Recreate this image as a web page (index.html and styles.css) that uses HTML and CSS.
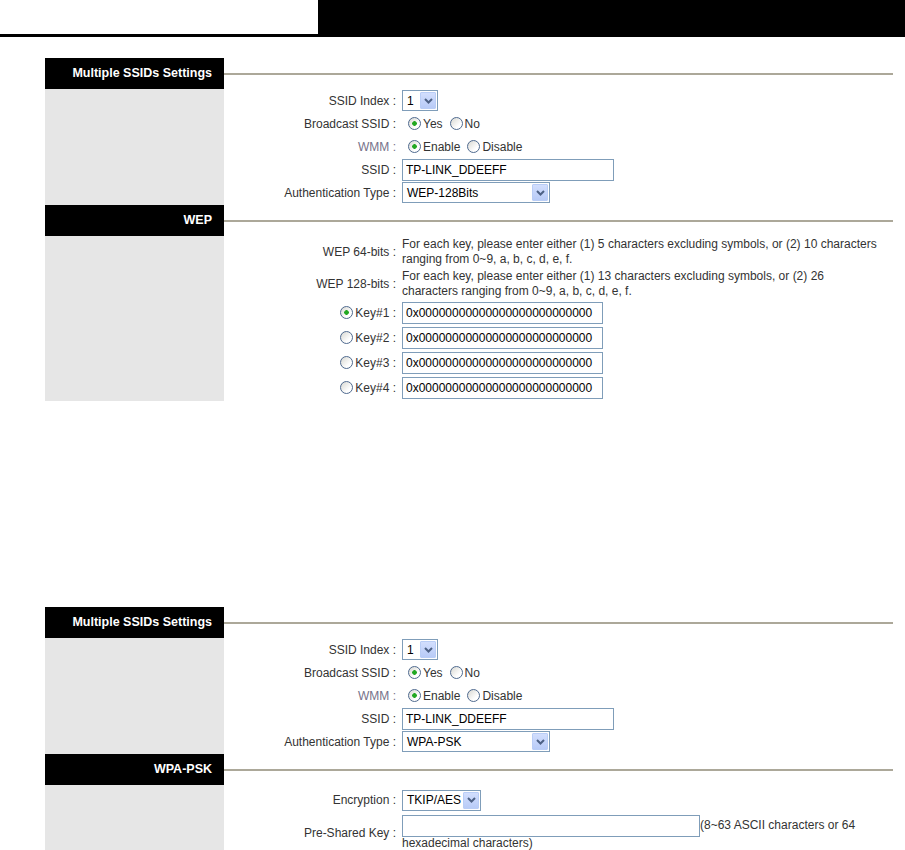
FILE: index.html
```html
<!DOCTYPE html>
<html lang="en">
<head>
  <meta charset="UTF-8">
  <meta name="viewport" content="width=device-width, initial-scale=1.0">
  <title>Multiple SSIDs Settings</title>
  <link rel="stylesheet" href="styles.css">
</head>
<body>

  <div class="topbar">
    <div class="topbar-left"></div>
    <div class="topbar-right"></div>
  </div>

  <!-- Multiple SSIDs with WEP -->
  <div class="panel">
    <div class="panel-head">Multiple SSIDs Settings</div>
    <div class="panel-rule"><span></span></div>
    <div class="panel-side"></div>
    <div class="panel-body">
      <div class="row">
        <label>SSID Index :</label>
        <div class="select sel-index"><span>1</span><i class="drop"><svg width="9" height="6" viewBox="0 0 9 6"><path d="M1 1 L4.5 4.5 L8 1" /></svg></i></div>
      </div>
      <div class="row">
        <label>Broadcast SSID :</label>
        <div class="choices">
          <input type="radio" class="radio" name="bc1" checked><span>Yes</span>
          <input type="radio" class="radio" name="bc1"><span>No</span>
        </div>
      </div>
      <div class="row">
        <label class="dim">WMM :</label>
        <div class="choices">
          <input type="radio" class="radio" name="wmm1" checked><span>Enable</span>
          <input type="radio" class="radio" name="wmm1"><span>Disable</span>
        </div>
      </div>
      <div class="row">
        <label>SSID :</label>
        <input type="text" class="text txt-ssid" value="TP-LINK_DDEEFF">
      </div>
      <div class="row">
        <label>Authentication Type :</label>
        <div class="select sel-auth"><span>WEP-128Bits</span><i class="drop"><svg width="9" height="6" viewBox="0 0 9 6"><path d="M1 1 L4.5 4.5 L8 1" /></svg></i></div>
      </div>
    </div>

    <div class="panel-head">WEP</div>
    <div class="panel-rule"><span></span></div>
    <div class="panel-side"></div>
    <div class="panel-body">
      <div class="row desc">
        <label>WEP 64-bits :</label>
        <div class="note">For each key, please enter either (1) 5 characters excluding symbols, or (2) 10 characters<br>ranging from 0~9, a, b, c, d, e, f.</div>
      </div>
      <div class="row desc">
        <label>WEP 128-bits :</label>
        <div class="note">For each key, please enter either (1) 13 characters excluding symbols, or (2) 26<br>characters ranging from 0~9, a, b, c, d, e, f.</div>
      </div>
      <div class="row key">
        <label><input type="radio" class="radio" name="key" checked>Key#1 :</label>
        <input type="text" class="text txt-key" value="0x00000000000000000000000000">
      </div>
      <div class="row key">
        <label><input type="radio" class="radio" name="key">Key#2 :</label>
        <input type="text" class="text txt-key" value="0x00000000000000000000000000">
      </div>
      <div class="row key">
        <label><input type="radio" class="radio" name="key">Key#3 :</label>
        <input type="text" class="text txt-key" value="0x00000000000000000000000000">
      </div>
      <div class="row key">
        <label><input type="radio" class="radio" name="key">Key#4 :</label>
        <input type="text" class="text txt-key" value="0x00000000000000000000000000">
      </div>
    </div>
  </div>

  <!-- Multiple SSIDs with WPA-PSK -->
  <div class="panel second">
    <div class="panel-head">Multiple SSIDs Settings</div>
    <div class="panel-rule"><span></span></div>
    <div class="panel-side"></div>
    <div class="panel-body">
      <div class="row">
        <label>SSID Index :</label>
        <div class="select sel-index"><span>1</span><i class="drop"><svg width="9" height="6" viewBox="0 0 9 6"><path d="M1 1 L4.5 4.5 L8 1" /></svg></i></div>
      </div>
      <div class="row">
        <label>Broadcast SSID :</label>
        <div class="choices">
          <input type="radio" class="radio" name="bc2" checked><span>Yes</span>
          <input type="radio" class="radio" name="bc2"><span>No</span>
        </div>
      </div>
      <div class="row">
        <label class="dim">WMM :</label>
        <div class="choices">
          <input type="radio" class="radio" name="wmm2" checked><span>Enable</span>
          <input type="radio" class="radio" name="wmm2"><span>Disable</span>
        </div>
      </div>
      <div class="row">
        <label>SSID :</label>
        <input type="text" class="text txt-ssid" value="TP-LINK_DDEEFF">
      </div>
      <div class="row">
        <label>Authentication Type :</label>
        <div class="select sel-auth"><span>WPA-PSK</span><i class="drop"><svg width="9" height="6" viewBox="0 0 9 6"><path d="M1 1 L4.5 4.5 L8 1" /></svg></i></div>
      </div>
    </div>

    <div class="panel-head">WPA-PSK</div>
    <div class="panel-rule"><span></span></div>
    <div class="panel-side"></div>
    <div class="panel-body">
      <div class="row enc">
        <label>Encryption :</label>
        <div class="select sel-enc"><span>TKIP/AES</span><i class="drop"><svg width="9" height="6" viewBox="0 0 9 6"><path d="M1 1 L4.5 4.5 L8 1" /></svg></i></div>
      </div>
      <div class="row psk">
        <label>Pre-Shared Key :</label>
        <div class="psk-field"><input type="text" class="text txt-psk" value="">(8~63 ASCII characters or 64 hexadecimal characters)</div>
      </div>
    </div>
  </div>

</body>
</html>
```

FILE: styles.css
```css
/* Page */
body {
  margin: 0;
  background-color: #ffffff;
  font-family: "Liberation Sans", Arial, sans-serif;
  font-size: 12px;
  color: #333333;
}

/* Top bar */
.topbar {
  display: flex;
  height: 37px;
}

.topbar-left {
  width: 318px;
  height: 34px;
  border-bottom: 3px solid #000000;
}

.topbar-right {
  flex: 1;
  background-color: #000000;
}

/* Settings panel */
.panel {
  display: grid;
  grid-template-columns: 179px 669px;
  margin: 21px 0 0 45px;
}

.panel.second {
  margin-top: 206px;
}

.panel-head {
  height: 31px;
  line-height: 31px;
  padding-right: 12px;
  background-color: #000000;
  color: #ffffff;
  font-weight: bold;
  font-size: 12.5px;
  text-align: right;
}

.panel-rule {
  display: flex;
  align-items: center;
}

.panel-rule span {
  width: 100%;
  height: 2px;
  background-color: #aca899;
}

.panel-side {
  background-color: #e6e6e6;
}

.panel-body {
  padding-bottom: 1px;
}

/* Form rows */
.row {
  display: grid;
  grid-template-columns: 172px 1fr;
  column-gap: 6px;
  align-items: center;
  height: 23px;
}

.row label {
  text-align: right;
  white-space: nowrap;
}

.row label.dim {
  color: #76728a;
}

.row.desc {
  height: auto;
  padding: 1px 0;
}

.note {
  line-height: 15px;
  white-space: nowrap;
}

.row.key {
  height: 25px;
}

.row.key label {
  display: flex;
  justify-content: flex-end;
  align-items: center;
}

.row.key .radio {
  margin: 0 2px 0 0;
}

.row.enc {
  height: 30px;
}

.row.psk {
  height: auto;
}

/* Radio buttons */
.choices {
  display: flex;
  align-items: center;
}

.radio {
  appearance: none;
  -webkit-appearance: none;
  width: 13px;
  height: 13px;
  margin: 0 2px 0 6px;
  border: 1px solid #4f6a8f;
  border-radius: 50%;
  background: linear-gradient(135deg, #d8d8d2, #ffffff 70%);
  box-sizing: border-box;
}

.radio:checked {
  background: radial-gradient(circle, #22a822 0, #22a822 2px, transparent 2.6px),
              linear-gradient(135deg, #d8d8d2, #ffffff 70%);
}

.choices span {
  margin-right: 1px;
}

/* Dropdowns */
.select {
  display: flex;
  align-items: center;
  justify-content: space-between;
  height: 21px;
  padding-left: 4px;
  border: 1px solid #7f9db9;
  background-color: #ffffff;
  color: #000000;
  box-sizing: border-box;
}

.drop {
  display: flex;
  align-items: center;
  justify-content: center;
  width: 16px;
  height: 17px;
  margin-right: 1px;
  border: 1px solid #b9cdf6;
  border-radius: 1px;
  background: linear-gradient(#d2defd, #b8cbf7);
  box-sizing: border-box;
}

.drop path {
  fill: none;
  stroke: #4d6185;
  stroke-width: 2;
}

.sel-index { width: 36px; }
.sel-auth { width: 148px; }
.sel-enc { width: 79px; }

/* Text boxes */
.text {
  height: 22px;
  padding: 0 3px;
  border: 1px solid #7f9db9;
  font-family: "Liberation Sans", Arial, sans-serif;
  font-size: 12px;
  color: #000000;
  box-sizing: border-box;
  outline: none;
}

.txt-ssid { width: 212px; }
.txt-key { width: 201px; }
.txt-psk {
  width: 298px;
  vertical-align: middle;
}

.psk-field {
  line-height: 13px;
}
```
